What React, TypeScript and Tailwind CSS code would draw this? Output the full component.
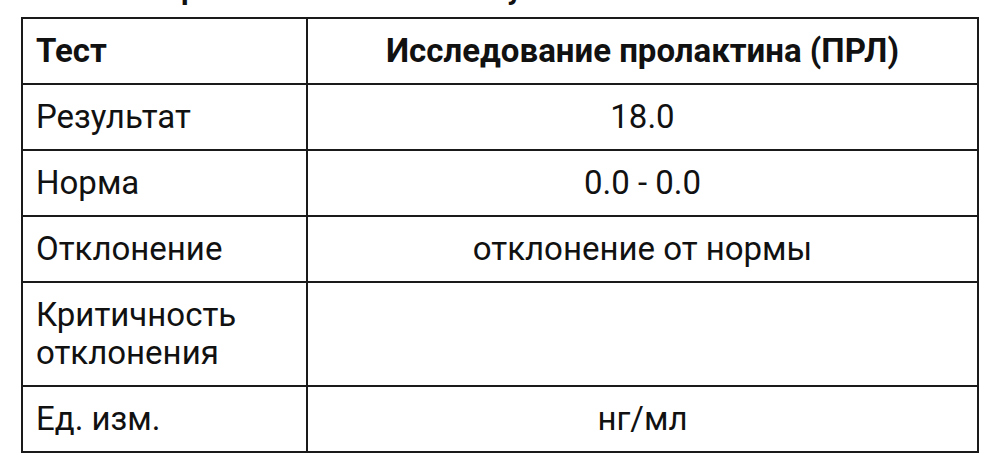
const rows: { label: string; value: string }[] = [
  { label: "Результат", value: "18.0" },
  { label: "Норма", value: "0.0 - 0.0" },
  { label: "Отклонение", value: "отклонение от нормы" },
  { label: "Критичность отклонения", value: "" },
  { label: "Ед. изм.", value: "нг/мл" },
];

export default function App() {
  return (
    <div
      className="h-[467px] w-[1000px] overflow-hidden bg-white text-[#111] px-[21px]"
      style={{ fontFamily: "Roboto, 'Noto Sans', sans-serif" }}
    >
      <h2 className="-mt-[30px] mb-[9px] -ml-[7px] text-[30px] leading-[38px] font-bold whitespace-nowrap">
        Анализ на пролактин и его полное уточнение
      </h2>
      <table className="w-[958px] border-collapse border-2 border-[#1a1a1a] text-[33px] leading-[38px]">
        <thead>
          <tr>
            <th className="w-[285px] border-2 border-[#1a1a1a] px-[13px] py-[13px] text-left font-bold">
              Тест
            </th>
            <th className="border-2 border-[#1a1a1a] px-[13px] py-[13px] text-center font-bold">
              Исследование пролактина (ПРЛ)
            </th>
          </tr>
        </thead>
        <tbody>
          {rows.map((r) => (
            <tr key={r.label}>
              <td className="w-[285px] border-2 border-[#1a1a1a] px-[13px] py-[13px] text-left align-middle">
                {r.label === "Критичность отклонения" ? (
                  <>
                    Критичность
                    <br />
                    отклонения
                  </>
                ) : (
                  r.label
                )}
              </td>
              <td className="border-2 border-[#1a1a1a] px-[13px] py-[13px] text-center align-middle">
                {r.value}
              </td>
            </tr>
          ))}
        </tbody>
      </table>
    </div>
  );
}
